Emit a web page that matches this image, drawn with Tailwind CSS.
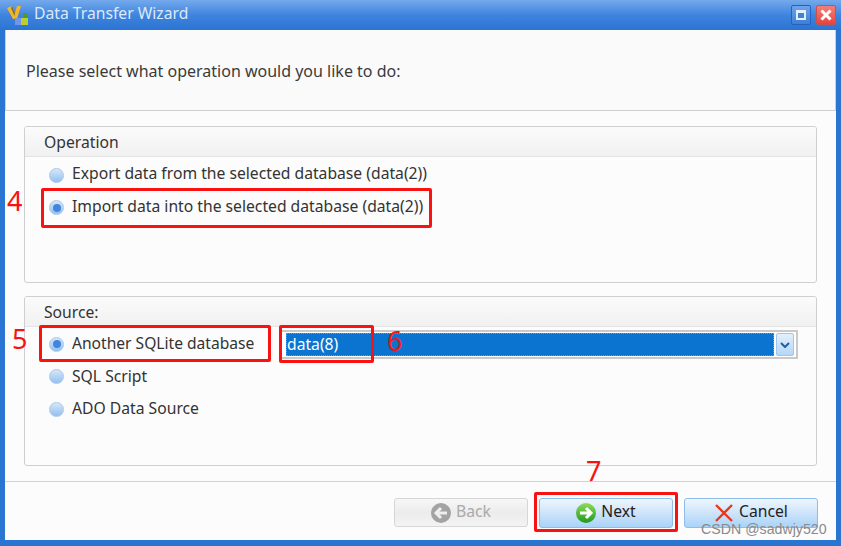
<!DOCTYPE html>
<html><head><meta charset="utf-8">
<script src="https://cdn.jsdelivr.net/npm/@tailwindcss/browser@4"></script>
</head>
<body class="m-0 overflow-hidden">
<div class="relative flex h-[546px] w-[841px] flex-col overflow-hidden bg-[#2a74d2] font-['Noto_Sans',sans-serif] text-[15.7px] text-[#333]">
  <!-- Title bar -->
  <div class="flex h-[30px] shrink-0 items-center bg-gradient-to-b from-[#74a9ec] via-[#3f84de] to-[#2a74d2] pl-[7px] pr-[5px]">
    <svg class="h-[22px] w-[22px]" viewBox="0 0 22 22">
      <path d="M0 4 L5 2 L8 9 L10 2 L14 2 L10 15 L6 15 Z" fill="#f2b62a"/>
      <path d="M5 2 L8 9 L7.5 12 L4 4 Z" fill="#8a6a20"/>
      <rect x="8" y="14" width="6" height="7" fill="#7394e8"/>
      <rect x="14" y="14" width="7" height="7" fill="#b9d02e"/>
      <rect x="16" y="9" width="4" height="5" fill="#4f9a2a"/>
    </svg>
    <span class="ml-[5px] -translate-y-px text-[#dbe9f8]">Data Transfer Wizard</span>
    <div class="ml-auto flex gap-[5px]">
      <div class="flex h-[20px] w-[20px] items-center justify-center rounded-[2px] border border-[#2563b8] bg-gradient-to-b from-[#6ea4ea] to-[#3a7fdb]">
        <div class="h-[10px] w-[10px] border-2 border-t-[3px] border-[#e6f0fb] bg-[#3f82dc]"></div>
      </div>
      <div class="flex h-[20px] w-[20px] items-center justify-center rounded-[2px] border border-[#c9504e] bg-gradient-to-b from-[#f27f79] to-[#e8413d]">
        <svg class="h-[14px] w-[14px]" viewBox="0 0 14 14"><path d="M2.5 2.5 L11.5 11.5 M11.5 2.5 L2.5 11.5" stroke="#fff" stroke-width="3"/></svg>
      </div>
    </div>
  </div>
  <!-- Client area -->
  <div class="ml-[5px] mr-[5px] mb-[6px] flex min-h-0 flex-1 flex-col bg-[#fcfcfc]">
    <div class="flex h-[81px] shrink-0 items-center border-b border-l border-r border-[#cfcfcf] bg-[#fafafa] pl-[20px] pt-[2px]">
      <span class="text-[16px] text-[#3a3a3a]">Please select what operation would you like to do:</span>
    </div>
    <div class="flex flex-1 flex-col gap-[13px] px-[19px] pt-[15px]">
      <!-- Operation -->
      <div class="h-[157px] overflow-hidden rounded-[3px] border border-[#cfcfcf] bg-[#fcfcfc]">
        <div class="flex h-[30px] items-center border-b border-[#e4e4e4] bg-gradient-to-b from-[#fbfbfb] to-[#f1f1f1] pl-[19px] pt-[2px]">Operation</div>
        <div class="flex flex-col pl-[24px] pt-[2px]">
          <div class="flex h-[32px] items-center gap-[8px]"><span class="h-[15px] w-[15px] rounded-full border border-[#a9c8ea] bg-gradient-to-b from-[#d6e6f7] to-[#92c0f1]"></span><span class="-translate-y-px">Export data from the selected database (data(2))</span></div>
          <div class="flex h-[33px] items-center gap-[8px]"><span class="flex h-[15px] w-[15px] items-center justify-center rounded-full border border-[#a9c8ea] bg-gradient-to-b from-[#d6e6f7] to-[#92c0f1]"><span class="h-[8px] w-[8px] rounded-full bg-[#3f86dc]"></span></span><span class="-translate-y-px">Import data into the selected database (data(2))</span></div>
        </div>
      </div>
      <!-- Source -->
      <div class="h-[170px] overflow-hidden rounded-[3px] border border-[#cfcfcf] bg-[#fcfcfc]">
        <div class="flex h-[30px] items-center border-b border-[#e4e4e4] bg-gradient-to-b from-[#fbfbfb] to-[#f1f1f1] pl-[19px] pt-[2px]">Source:</div>
        <div class="flex items-start pl-[24px]">
          <div class="flex w-[231px] shrink-0 flex-col pt-[1px]">
            <div class="flex h-[32px] items-center gap-[8px]"><span class="flex h-[15px] w-[15px] items-center justify-center rounded-full border border-[#a9c8ea] bg-gradient-to-b from-[#d6e6f7] to-[#92c0f1]"><span class="h-[8px] w-[8px] rounded-full bg-[#3f86dc]"></span></span><span class="text-[15.6px]">Another SQLite database</span></div>
            <div class="flex h-[33px] items-center gap-[8px]"><span class="h-[15px] w-[15px] rounded-full border border-[#a9c8ea] bg-gradient-to-b from-[#d6e6f7] to-[#92c0f1]"></span><span>SQL Script</span></div>
            <div class="flex h-[32px] items-center gap-[8px]"><span class="h-[15px] w-[15px] rounded-full border border-[#a9c8ea] bg-gradient-to-b from-[#d6e6f7] to-[#92c0f1]"></span><span>ADO Data Source</span></div>
          </div>
          <div class="mt-[3px] flex h-[29px] w-[518px] items-center border-2 border-[#c9c9c9] bg-white pl-[4px] pr-[2px]">
            <div class="flex h-[23px] flex-1 items-center border border-dotted border-[#c9872f] bg-[#0a74d0] text-white">data(8)</div>
            <div class="ml-[2px] flex h-[23px] w-[18px] items-center justify-center rounded-[2px] border border-[#9fc6ee] bg-gradient-to-b from-[#e3f0fc] to-[#b5d6f7]">
              <svg class="h-[6px] w-[10px]" viewBox="0 0 10 6"><path d="M1 1 L5 5 L9 1" fill="none" stroke="#1f5fa8" stroke-width="2"/></svg>
            </div>
          </div>
        </div>
      </div>
    </div>
    <!-- Footer -->
    <div class="flex h-[59px] shrink-0 items-start justify-end gap-[11px] border-t border-[#d2d2d2] pr-[18px] pt-[16px]">
      <div class="flex h-[29px] w-[134px] items-center justify-center gap-[5px] rounded-[3px] border border-[#d6d6d6] bg-gradient-to-b from-[#f7f7f7] via-[#ececec] to-[#f3f3f3] text-[#a9a9a9]">
        <svg class="h-[20px] w-[20px]" viewBox="0 0 20 20"><circle cx="10" cy="10" r="10" fill="#a3a3a3"/><path d="M16 10 H6 M10 5 L5 10 L10 15" fill="none" stroke="#eee" stroke-width="3"/></svg>
        <span class="-translate-y-px">Back</span>
      </div>
      <div class="flex h-[30px] w-[134px] items-center justify-center gap-[5px] rounded-[3px] border border-[#8fbce8] bg-gradient-to-b from-[#eef6fe] via-[#cde4fa] to-[#a9d3f8] text-[#222]">
        <svg class="h-[20px] w-[20px]" viewBox="0 0 20 20"><defs><linearGradient id="g" x1="0" y1="0" x2="0" y2="1"><stop offset="0" stop-color="#8fdb5a"/><stop offset="1" stop-color="#1d9a22"/></linearGradient></defs><circle cx="10" cy="10" r="10" fill="url(#g)"/><path d="M4 10 H14 M10 5 L15 10 L10 15" fill="none" stroke="#fff" stroke-width="3"/></svg>
        <span class="-translate-y-px">Next</span>
      </div>
      <div class="flex h-[30px] w-[134px] items-center justify-center gap-[5px] rounded-[3px] border border-[#8fbce8] bg-gradient-to-b from-[#eef6fe] via-[#cde4fa] to-[#a9d3f8] text-[#222]">
        <svg class="h-[20px] w-[20px]" viewBox="0 0 20 20"><path d="M2 2 L18 18 M18 2 L2 18" stroke="#e8391c" stroke-width="2.4"/></svg>
        <span class="-translate-y-px">Cancel</span>
      </div>
    </div>
  </div>
  <!-- Annotations -->
  <div class="absolute left-[41px] top-[188px] h-[40px] w-[391px] rounded-[2px] border-[3px] border-[#f81212]"></div>
  <div class="absolute left-[39px] top-[325px] h-[37px] w-[232px] rounded-[2px] border-[3px] border-[#f81212]"></div>
  <div class="absolute left-[279px] top-[325px] h-[38px] w-[95px] rounded-[2px] border-[3px] border-[#f81212]"></div>
  <div class="absolute left-[534px] top-[492px] h-[40px] w-[144px] rounded-[2px] border-[3px] border-[#f81212]"></div>
  <span class="absolute left-[7px] top-[183px] text-[27px] leading-[36px] text-[#f81212]">4</span>
  <span class="absolute left-[12px] top-[321px] text-[27px] leading-[36px] text-[#f81212]">5</span>
  <span class="absolute left-[387px] top-[323px] text-[27px] leading-[36px] text-[#f81212]">6</span>
  <span class="absolute left-[586px] top-[453px] text-[27px] leading-[36px] text-[#f81212]">7</span>
  <span class="absolute left-[701px] top-[520px] font-['Liberation_Sans',sans-serif] text-[14.2px] leading-[18px] text-[#8a8a8a]">CSDN @sadwjy520</span>
</div>
</body></html>
